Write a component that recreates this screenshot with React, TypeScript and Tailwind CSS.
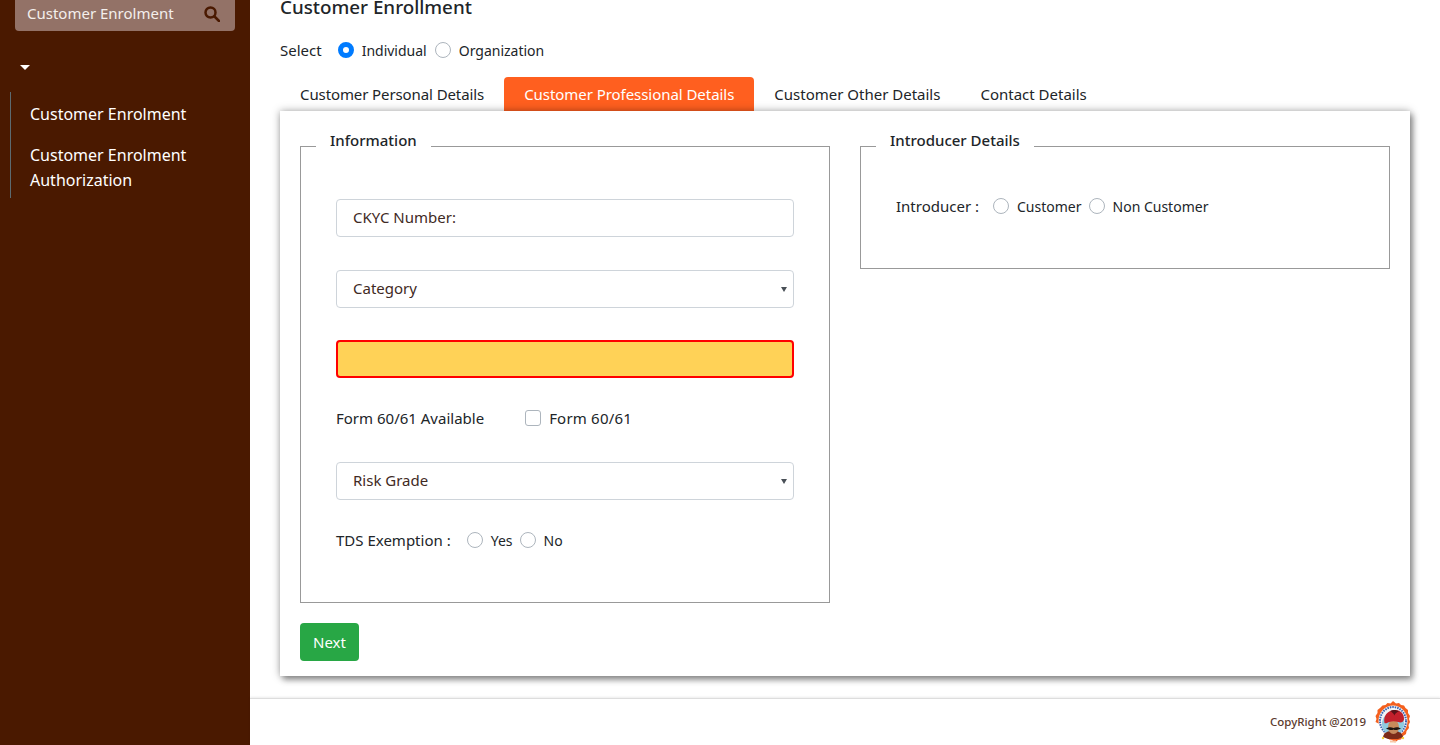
import { ReactNode } from "react";

const font = "font-['Noto_Sans','Open_Sans',sans-serif]";

function Radio({ name, label, checked }: { name: string; label: string; checked?: boolean }) {
  return (
    <label className="flex items-center text-[14px]">
      <input
        type="radio"
        name={name}
        defaultChecked={checked}
        className="appearance-none w-4 h-4 rounded-full border border-[#adb5bd] bg-white checked:border-[5px] checked:border-[#007bff] mr-2"
      />
      <span>{label}</span>
    </label>
  );
}

function Group({ title, children, className }: { title: string; children: ReactNode; className: string }) {
  return (
    <fieldset className={`border border-[#999999] ${className}`}>
      <legend className="ml-[15px] px-[14px] h-[34px] leading-[22px] font-medium text-[#212529]">{title}</legend>
      <div className="px-[35px]">{children}</div>
    </fieldset>
  );
}

function SelectBox({ label }: { label: string }) {
  return (
    <div className="relative h-[38px]">
      <select className="appearance-none w-full h-full rounded border border-[#ced4da] bg-white pl-4 pb-[2px] text-[#3f2a24] outline-none">
        <option>{label}</option>
      </select>
      <svg className="absolute right-[7px] top-[17px]" width="6" height="5" viewBox="0 0 6 5">
        <path d="M0 0h6L3 5z" fill="#495057" />
      </svg>
    </div>
  );
}

function Logo() {
  return (
    <svg width="36" height="44" viewBox="0 0 36 44" className="ml-[9px] mt-[2px]">
      <path d="M18 0l3 2.500 3-.5 2 2 3 .5 1.500 2.500 2.500 2 0 3 2 3-1 3 1 3-1.500 3 .5 3-2.500 3-.5 3-3 2-2 3.500-3 .5-3 2.500-3-2.500-3-.5-2-3.500-3-2-.5-3-2.500-3 .5-3L.5 21l1-3-1-3 2-3 0-3 2.500-2L7.500 4.500l3-.5 2-2 3 .5z" fill="#f4601e" />
      <ellipse cx="18" cy="20" rx="14.500" ry="15.500" fill="#f2f4f6" />
      <ellipse cx="18" cy="20" rx="13" ry="14" fill="none" stroke="#3a62b0" strokeWidth="2" strokeDasharray="1.500 1" />
      <ellipse cx="18" cy="23" rx="11" ry="11.500" fill="#8fcbe0" />
      <path d="M8 36c1-5 5-6 10-6s9 1 10 6l-5 2H13z" fill="#7b2b18" />
      <ellipse cx="18.500" cy="26" rx="5.500" ry="7" fill="#c68a5c" />
      <path d="M11 27.500c3-1.500 5-1.500 7.500-.5 2.500-1 4.500-1 7.500.5-3 1.500-5.500 2-7.500 1-2 1-4.500 .5-7.500-1z" fill="#1d1512" />
      <path d="M9.500 22c-1.500-7 3-12.500 10-13 6-.5 10 4 9.500 9.500-.5 3-3.500 3.500-6 2.500-3-1-6-1-8.500 0-1.500.5-4 2-5 1z" fill="#c2202c" />
      <path d="M15 10c3-1.500 7-1 9 .5-2 .5-4 2-4.500 4-1-2-2.500-3.500-4.500-4.500z" fill="#5a1218" />
      <circle cx="8" cy="37" r="1.200" fill="#f7d23c" />
      <circle cx="28" cy="37" r="1.200" fill="#f7d23c" />
      <path d="M15 39.500h6v2h-6z" fill="#f7c9a8" />
    </svg>
  );
}

export default function App() {
  return (
    <div className={`${font} flex h-[745px] overflow-hidden bg-white text-[15px] text-[#212529]`}>
      <aside className="w-[250px] shrink-0 bg-[#4a1900] text-white">
        <div className="mx-[15px] h-[31px] flex items-center justify-between rounded-b bg-[#937267] pl-3 pr-[15px] text-[#f4efec]">
          <span className="pb-[4px]">Customer Enrolment</span>
          <svg width="16" height="16" viewBox="0 0 16 16" fill="none" stroke="#4a1900" strokeWidth="2.500" className="mb-[3px]">
            <circle cx="6.500" cy="6.500" r="5" />
            <path d="M10.500 10.500 15 15" strokeLinecap="round" />
          </svg>
        </div>
        <div className="mt-[34px] ml-5 w-0 h-0 border-x-[5.500px] border-x-transparent border-t-[5px] border-t-white" />
        <ul className="mt-[22px] ml-[10px] border-l border-[#5c6a70] pl-[19px] pt-[10px] pb-[5px] text-[16px] leading-[25px]">
          <li className="mb-4">Customer Enrolment</li>
          <li>Customer Enrolment Authorization</li>
        </ul>
      </aside>

      <main className="flex-1 flex flex-col min-w-0">
        <div className="px-[30px] flex flex-col">
          <h1 className="h-[14px] text-[18.8px] leading-[14px] font-medium whitespace-nowrap">Customer Enrollment</h1>
          <div className="mt-6 h-6 flex items-center">
            <span className="mr-4">Select</span>
            <Radio name="type" label="Individual" checked />
            <span className="w-2" />
            <Radio name="type" label="Organization" />
          </div>
          <nav className="mt-[15px] flex h-[34px] items-stretch leading-[34px]">
            <a className="px-5 tracking-[-0.1px]">Customer Personal Details</a>
            <a className="px-5 tracking-[-0.05px] rounded-t bg-[#ff5f1f] text-white">Customer Professional Details</a>
            <a className="px-5">Customer Other Details</a>
            <a className="px-5">Contact Details</a>
          </nav>
          <section className="w-[1130px] h-[565px] pt-[18px] px-5 bg-white shadow-[0_0_8px_rgba(0,0,0,0.35),3px_4px_6px_rgba(0,0,0,0.35)]">
            <div className="flex gap-[30px] items-start">
              <Group title="Information" className="w-[530px] h-[474px]">
                <input
                  placeholder="CKYC Number:"
                  className="mt-9 block w-full h-[38px] rounded border border-[#ced4da] pl-4 pb-[2px] outline-none placeholder:text-[#3f2a24]"
                />
                <div className="mt-[33px]">
                  <SelectBox label="Category" />
                </div>
                <input className="mt-8 w-full h-[38px] rounded border-2 border-[#ff0000] bg-[#ffd257] outline-none block" />
                <div className="mt-7 h-6 flex items-center">
                  <span>Form 60/61 Available</span>
                  <label className="ml-[41px] flex items-center tracking-[0.2px]">
                    <input type="checkbox" className="appearance-none w-4 h-4 rounded-[3px] border border-[#adb5bd] bg-white mr-2" />
                    <span>Form 60/61</span>
                  </label>
                </div>
                <div className="mt-8">
                  <SelectBox label="Risk Grade" />
                </div>
                <div className="mt-7 h-6 flex items-center">
                  <span className="mr-4">TDS Exemption :</span>
                  <Radio name="tds" label="Yes" />
                  <span className="w-[7px]" />
                  <Radio name="tds" label="No" />
                </div>
              </Group>
              <Group title="Introducer Details" className="w-[530px] h-[140px]">
                <div className="mt-[31px] h-6 flex items-center">
                  <span className="mr-[14px]">Introducer :</span>
                  <Radio name="intro" label="Customer" />
                  <span className="w-[7px]" />
                  <Radio name="intro" label="Non Customer" />
                </div>
              </Group>
            </div>
            <button className="mt-5 w-[59px] h-[38px] rounded bg-[#28a745] text-white">Next</button>
          </section>
        </div>
        <footer className="mt-[22px] flex-1 border-t border-[#dddddd] shadow-[0_-1px_2px_rgba(0,0,0,0.08)] flex items-center justify-end pr-[29px]">
          <span className="text-[11.5px] font-medium text-[#5c3a2e]">CopyRight @2019</span>
          <Logo />
        </footer>
      </main>
    </div>
  );
}
